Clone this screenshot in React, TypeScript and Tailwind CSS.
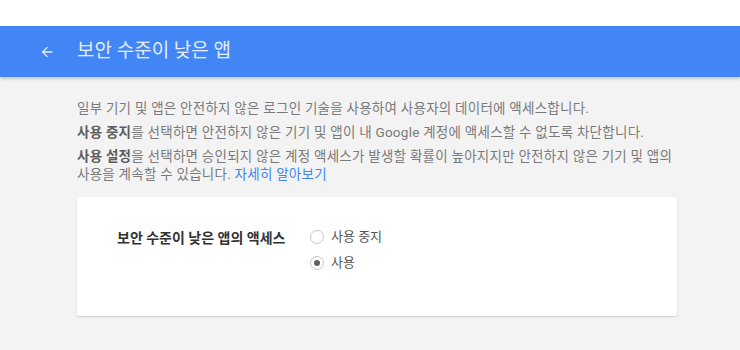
const font = { fontFamily: 'Roboto, "Noto Sans CJK KR", sans-serif' };

function Radio({ checked, label }: { checked?: boolean; label: string }) {
  return (
    <label className="flex h-6 items-center gap-[7px] text-[13px] text-[#555]">
      <span className="flex h-[14px] w-[14px] items-center justify-center rounded-full border border-[#c8c8c8] bg-white">
        {checked && <span className="h-[6px] w-[6px] rounded-full bg-[#616161]" />}
      </span>
      {label}
    </label>
  );
}

export default function App() {
  return (
    <div className="min-h-[350px] w-[740px] bg-[#f3f3f3]" style={font}>
      <div className="h-[26px] bg-white" />
      {/* header */}
      <div className="flex h-[51px] items-center bg-[#4285f4] shadow-[0_2px_3px_rgba(0,0,0,0.18)]">
        <svg className="ml-[39px] h-[16px] w-[16px] text-white/85" viewBox="0 0 24 24" fill="currentColor">
          <path d="M20 11H7.83l5.59-5.59L12 4l-8 8 8 8 1.41-1.41L7.83 13H20v-2z" />
        </svg>
        <h1 className="ml-[22px] text-[19px] font-normal text-white/85">보안 수준이 낮은 앱</h1>
      </div>

      <div className="ml-[77px] w-[600px] pt-[22px]">
        <div className="flex flex-col gap-[6px] break-keep text-[13.5px] leading-[18px] tracking-[0.25px] text-[#7a7a7a]">
          <p>일부 기기 및 앱은 안전하지 않은 로그인 기술을 사용하여 사용자의 데이터에 액세스합니다.</p>
          <p>
            <b className="font-bold text-[#5c5c5c]">사용 중지</b>를 선택하면 안전하지 않은 기기 및 앱이 내 Google 계정에 액세스할 수 없도록 차단합니다.
          </p>
          <p>
            <b className="font-bold text-[#5c5c5c]">사용 설정</b>을 선택하면 승인되지 않은 계정 액세스가 발생할 확률이 높아지지만 안전하지 않은 기기 및 앱의 사용을 계속할 수 있습니다.{" "}
            <a className="text-[#4285f4]">자세히 알아보기</a>
          </p>
        </div>

        <div className="mt-[14px] flex rounded-[3px] bg-white pb-[41px] pl-[40px] pt-[28px] shadow-[0_1px_2px_rgba(0,0,0,0.15)]">
          <div className="flex h-6 w-[193px] items-center pt-[2px] text-[14px] font-bold text-[#333]">
            보안 수준이 낮은 앱의 액세스
          </div>
          <div className="flex flex-col gap-[2px]">
            <Radio label="사용 중지" />
            <Radio checked label="사용" />
          </div>
        </div>
      </div>
    </div>
  );
}
